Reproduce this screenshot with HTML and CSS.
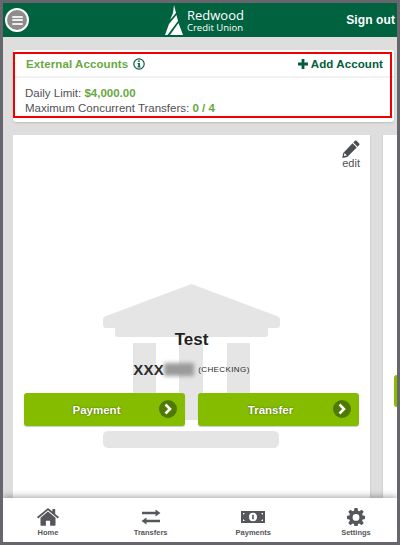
FILE: index.html
```html
<!DOCTYPE html>
<html>
  <head>
    <meta charset="utf-8">
    <meta name="viewport" content="width=device-width, initial-scale=1.0">
    <title>External Accounts</title>
    <link rel="stylesheet" href="styles.css">
  </head>
  <body>
    <div class="container">
      <div class="header">
        <div class="menu-btn"><span></span><span></span><span></span></div>
        <div class="logo">
          <svg class="logo-tree" width="18" height="31" viewBox="0 0 18 31">
            <polygon fill="#fff" points="9,0 11,8 5,15 8,8"/>
            <polygon fill="#fff" points="11.500,10 13,16 2.500,30 0,30 4,19"/>
            <polygon fill="#fff" points="13.500,18 18,30 5,30"/>
          </svg>
          <div class="logo-text">
            <div class="logo-top">Redwood</div>
            <div class="logo-bottom">Credit Union</div>
          </div>
        </div>
        <div class="sign-out">Sign out</div>
      </div>

      <div class="main">
        <div class="panel">
          <div class="panel-head">
            <div class="panel-title">
              External Accounts
              <svg width="12" height="12" viewBox="0 0 12 12">
                <circle cx="6" cy="6" r="5.200" fill="none" stroke="#0a5f3e" stroke-width="1.200"/>
                <rect x="5.200" y="2.400" width="1.600" height="1.600" fill="#0a5f3e"/>
                <polygon fill="#0a5f3e" points="4.600,5 6.900,5 6.900,8.400 7.600,8.400 7.600,9.400 4.500,9.400 4.500,8.400 5.200,8.400 5.200,6 4.600,6"/>
              </svg>
            </div>
            <div class="add-account">
              <svg width="10" height="10" viewBox="0 0 10 10"><path fill="#005e3c" d="M3.600 0h2.800v3.600H10v2.800H6.400V10H3.600V6.400H0V3.600h3.600z"/></svg>
              Add Account
            </div>
          </div>
          <div class="panel-body">
            <div>Daily Limit: <b>$4,000.00</b></div>
            <div>Maximum Concurrent Transfers: <b>0 / 4</b></div>
          </div>
          <div class="highlight"></div>
        </div>

        <div class="cards">
          <div class="card">
            <svg class="bank" width="177" height="166" viewBox="0 0 177 166">
              <path fill="#e5e5e5" d="M88.500 0L174 32q3 1 3 4v5q0 3-3 3h-9v6q0 3-3 3H15q-3 0-3-3v-6H3q-3 0-3-3v-5q0-3 3-4z"/>
              <rect fill="#e5e5e5" x="30" y="59" width="23" height="77"/>
              <rect fill="#e5e5e5" x="76" y="59" width="24" height="77"/>
              <rect fill="#e5e5e5" x="124" y="59" width="23" height="77"/>
              <rect fill="#e5e5e5" x="0" y="147" width="176" height="17" rx="5"/>
            </svg>
            <div class="edit">
              <svg width="18" height="18" viewBox="0 0 18 18">
                <path fill="#4a4d52" d="M13 .8q.8-.8 1.600 0l2.600 2.600q.8.800 0 1.600l-1.700 1.700-4.200-4.200zM10.500 3.300l4.200 4.200-9.500 9.500-4.900.9.900-4.900zM2.500 13l-.6 3 3-.6z"/>
              </svg>
              <span>edit</span>
            </div>
            <div class="card-name">Test</div>
            <div class="card-number">
              <b>XXX</b><span class="masked"></span><span class="card-type">(CHECKING)</span>
            </div>
            <div class="card-actions">
              <div class="action">Payment
                <span class="go"><svg width="10" height="12" viewBox="0 0 10 12"><path fill="none" stroke="#fff" stroke-width="2.600" d="M2.500 1.500L7 6l-4.500 4.500"/></svg></span>
              </div>
              <div class="action">Transfer
                <span class="go"><svg width="10" height="12" viewBox="0 0 10 12"><path fill="none" stroke="#fff" stroke-width="2.600" d="M2.500 1.500L7 6l-4.500 4.500"/></svg></span>
              </div>
            </div>
          </div>
          <div class="card card-next">
            <div class="next-action"></div>
          </div>
        </div>
      </div>

      <div class="footer">
        <div class="tab">
          <svg width="22" height="18" viewBox="0 0 22 18"><path fill="#55575c" d="M11 3.600L3.500 9.800V17q0 .8.800.8h4.600v-5h4.200v5h4.600q.8 0 .8-.8V9.800zM11 0L0 9l1.200 1.400L11 2.300l9.800 8.100L22 9l-3.800-3.100V1h-2.800v2.600z"/></svg>
          <span>Home</span>
        </div>
        <div class="tab">
          <svg width="20" height="18" viewBox="0 0 20 18"><path fill="#55575c" d="M14.500 1.500L19.500 5l-5 3.500V6.300H1V3.700h13.500zM5.500 9.500v2.200H19v2.600H5.500v2.200L.5 13z"/></svg>
          <span>Transfers</span>
        </div>
        <div class="tab">
          <svg width="24" height="18" viewBox="0 0 24 18"><path fill="#55575c" fill-rule="evenodd" d="M0 3h24v12H0zM8 9a4 4.200 0 0 0 8 0 4 4.200 0 0 0-8 0z"/><path fill="#fff" d="M2 5h2L2 7zM22 5h-2l2 2zM2 13h2l-2-2zM22 13h-2l2-2z"/><path fill="#55575c" d="M11.200 6.800h1.600v4.400h-1.600z"/></svg>
          <span>Payments</span>
        </div>
        <div class="tab">
          <svg width="18" height="18" viewBox="-1 -1 20 20"><path fill="#55575c" fill-rule="evenodd" d="M7.300-1h3.400l.5 3.100 1.500.6 2.500-1.800 2.400 2.400-1.800 2.500.6 1.500 3.100.5v3.400l-3.100.5-.6 1.500 1.800 2.500-2.400 2.400-2.500-1.800-1.500.6-.5 3.100H7.300l-.5-3.100-1.500-.6-2.500 1.800L.4 15.700l1.800-2.500-.6-1.500-3.100-.5V7.800l3.100-.5.6-1.500L.4 3.300 2.800.9l2.500 1.800 1.500-.6zM9 5.700a3.800 3.800 0 1 0 0 7.600 3.800 3.800 0 0 0 0-7.600z"/></svg>
          <span>Settings</span>
        </div>
      </div>
    </div>
  </body>
</html>
```

FILE: styles.css
```css
html, body {
  margin: 0;
  padding: 0;
}
body {
  font-family: "Liberation Sans", Arial, sans-serif;
  color: #4f5155;
}
.container {
  display: flex;
  flex-direction: column;
  width: 400px;
  height: 545px;
  box-sizing: border-box;
  border: 3px solid #66666c;
  overflow: hidden;
  background-color: #dedede;
}

/* top bar */
.header {
  display: flex;
  align-items: center;
  flex: none;
  height: 34px;
  padding: 0 2px;
  background-color: #00623f;
}
.menu-btn {
  display: flex;
  flex-direction: column;
  justify-content: center;
  gap: 1.500px;
  flex: none;
  width: 24px;
  height: 24px;
  box-sizing: border-box;
  padding: 0 4.500px;
  border: 2px solid #fff;
  border-radius: 50%;
  background-color: #8d8d8d;
}
.menu-btn span {
  display: block;
  height: 2px;
  background-color: #eee;
  border-radius: 1px;
}
.logo {
  display: flex;
  align-items: center;
  gap: 4px;
  margin-left: 136px;
  color: #fff;
  font-family: "Open Sans", sans-serif;
}
.logo-top {
  font-size: 13px;
  line-height: 14px;
}
.logo-bottom {
  font-size: 9.500px;
  line-height: 11px;
}
.sign-out {
  margin-left: auto;
  color: #fff;
  font-size: 12px;
  font-weight: bold;
  letter-spacing: .1px;
}

.main {
  display: flex;
  flex-direction: column;
  flex: 1;
  min-height: 0;
  padding: 13px 3px 0 10px;
}

/* external accounts */
.panel {
  position: relative;
  flex: none;
  height: 72px;
  border-radius: 3px;
  background-color: #fff;
  box-shadow: 0 1px 2px rgba(0, 0, 0, .15);
}
.panel-head {
  display: flex;
  justify-content: space-between;
  align-items: center;
  height: 28px;
  box-sizing: border-box;
  padding: 1px 11px 0 13px;
  border-bottom: 2px solid #f1f1f1;
  font-size: 11.500px;
  font-weight: bold;
  letter-spacing: .1px;
}
.panel-title {
  display: flex;
  align-items: center;
  gap: 5px;
  color: #68a83f;
}
.add-account {
  display: flex;
  align-items: center;
  gap: 3px;
  color: #005e3c;
}
.panel-body {
  padding: 8px 12px 0;
  font-size: 11.500px;
  line-height: 14.500px;
}
.panel-body b {
  color: #68a83f;
}
.highlight {
  position: absolute;
  top: 2px;
  left: 0;
  width: 379px;
  height: 66px;
  box-sizing: border-box;
  border: 2px solid #f00000;
}

/* account cards */
.cards {
  display: flex;
  gap: 13px;
  flex: 1;
  min-height: 0;
  margin-top: 13px;
  overflow: hidden;
  margin-right: -3px;
}
.card {
  position: relative;
  flex: none;
  width: 357px;
  box-sizing: border-box;
  padding: 5px 11px 0;
  background-color: #fff;
  box-shadow: 0 0 2px rgba(0, 0, 0, .15);
}
.bank {
  position: absolute;
  top: 149px;
  left: 90px;
}
.edit {
  position: relative;
  display: flex;
  flex-direction: column;
  align-items: flex-end;
  margin-right: -1px;
  font-size: 11px;
  line-height: 11px;
}
.card-name {
  position: relative;
  margin-top: 161px;
  color: #222;
  font-size: 17px;
  font-weight: bold;
  line-height: 20px;
  text-align: center;
}
.card-number {
  position: relative;
  display: flex;
  align-items: center;
  justify-content: center;
  height: 18px;
  margin-top: 10px;
  color: #2a2a2a;
}
.card-number b {
  font-size: 15px;
  letter-spacing: .3px;
}
.masked {
  width: 30px;
  height: 13px;
  background-color: #9a9a9a;
  filter: blur(2px);
}
.card-type {
  margin-left: 4px;
  font-size: 8px;
  letter-spacing: .4px;
}
.card-actions {
  position: relative;
  display: flex;
  gap: 13px;
  margin-top: 15px;
}
.action {
  display: flex;
  align-items: center;
  justify-content: center;
  position: relative;
  flex: 1;
  height: 33px;
  box-sizing: border-box;
  padding-right: 16px;
  border-radius: 3px;
  background-color: #86bc00;
  box-shadow: 0 1px 1px rgba(0, 0, 0, .2);
  color: #fff;
  font-size: 11.500px;
  font-weight: bold;
  text-shadow: 0 0 2px #3c5a00;
}
.go {
  position: absolute;
  top: 7px;
  right: 8px;
  display: flex;
  align-items: center;
  justify-content: center;
  width: 18px;
  height: 18px;
  border-radius: 50%;
  background-color: #4f7a00;
}
.card-next {
  width: 40px;
  padding: 240px 0 0 11px;
}
.next-action {
  width: 30px;
  height: 32px;
  border-radius: 3px;
  background-color: #86bc00;
}

/* bottom nav */
.footer {
  position: relative;
  display: flex;
  justify-content: space-between;
  flex: none;
  height: 44px;
  box-sizing: border-box;
  padding: 10px 11px 0 15px;
  background-color: #fff;
  box-shadow: 0 -2px 6px rgba(0, 0, 0, .3);
}
.tab {
  display: flex;
  flex-direction: column;
  align-items: center;
  gap: 2px;
  width: 60px;
  color: #55575c;
  font-size: 7.500px;
  font-weight: bold;
  line-height: 10px;
}
```
